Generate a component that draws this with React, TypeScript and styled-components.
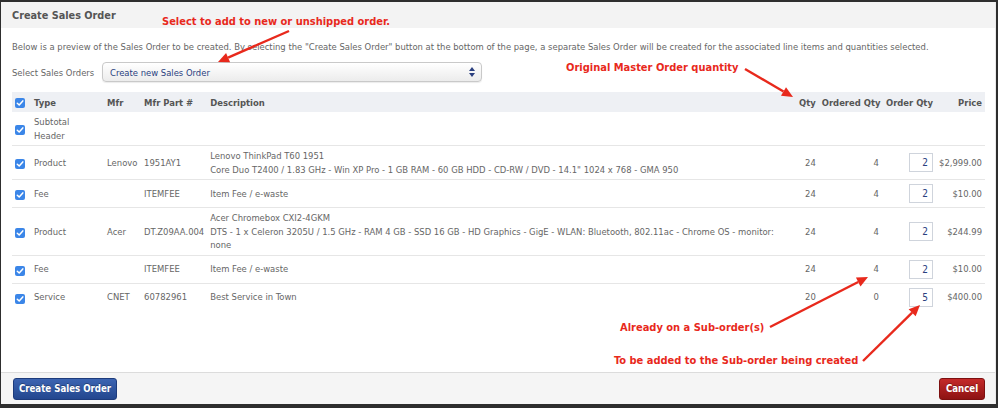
import styled, { createGlobalStyle } from 'styled-components'

const FONT = '"DejaVu Sans Condensed", "DejaVu Sans", Verdana, sans-serif'
const RED = '#e8291c'

type Line = {
  type: string[]
  mfr?: string
  part?: string
  desc?: string[]
  qty?: string
  ordered?: string
  orderQty?: string
  price?: string
}

const lines: Line[] = [
  { type: ['Subtotal', 'Header'] },
  {
    type: ['Product'],
    mfr: 'Lenovo',
    part: '1951AY1',
    desc: ['Lenovo ThinkPad T60 1951', 'Core Duo T2400 / 1.83 GHz - Win XP Pro - 1 GB RAM - 60 GB HDD - CD-RW / DVD - 14.1" 1024 x 768 - GMA 950'],
    qty: '24',
    ordered: '4',
    orderQty: '2',
    price: '$2,999.00',
  },
  { type: ['Fee'], part: 'ITEMFEE', desc: ['Item Fee / e-waste'], qty: '24', ordered: '4', orderQty: '2', price: '$10.00' },
  {
    type: ['Product'],
    mfr: 'Acer',
    part: 'DT.Z09AA.004',
    desc: [
      'Acer Chromebox CXI2-4GKM',
      'DTS - 1 x Celeron 3205U / 1.5 GHz - RAM 4 GB - SSD 16 GB - HD Graphics - GigE - WLAN: Bluetooth, 802.11ac - Chrome OS - monitor: none',
    ],
    qty: '24',
    ordered: '4',
    orderQty: '2',
    price: '$244.99',
  },
  { type: ['Fee'], part: 'ITEMFEE', desc: ['Item Fee / e-waste'], qty: '24', ordered: '4', orderQty: '2', price: '$10.00' },
  { type: ['Service'], mfr: 'CNET', part: '60782961', desc: ['Best Service in Town'], qty: '20', ordered: '0', orderQty: '5', price: '$400.00' },
]

const App = () => {
  return (
    <>
      <GlobalStyle />
      <Shell>
        <Dialog>
          <Header>
            <Title>Create Sales Order</Title>
          </Header>
          <Body>
            <Intro>
              Below is a preview of the Sales Order to be created. By selecting the "Create Sales Order" button at the bottom of the page, a separate
              Sales Order will be created for the associated line items and quantities selected.
            </Intro>
            <SelectRow>
              <SelectLabel>Select Sales Orders</SelectLabel>
              <SelectBox>
                <span>Create new Sales Order</span>
                <Spinner>
                  <svg width="6" height="10" viewBox="0 0 6 10">
                    <path d="M3 0 L6 4 L0 4 Z M0 6 L6 6 L3 10 Z" fill="#2a3f7f" />
                  </svg>
                </Spinner>
              </SelectBox>
            </SelectRow>
            <Table>
              <colgroup>
                <col style={{ width: 19 }} />
                <col style={{ width: 73 }} />
                <col style={{ width: 37 }} />
                <col style={{ width: 66 }} />
                <col style={{ width: 583 }} />
                <col style={{ width: 28 }} />
                <col style={{ width: 63 }} />
                <col style={{ width: 54 }} />
                <col style={{ width: 49 }} />
              </colgroup>
              <thead>
                <tr>
                  <Th>
                    <Check />
                  </Th>
                  <Th>Type</Th>
                  <Th>Mfr</Th>
                  <Th>Mfr Part #</Th>
                  <Th>Description</Th>
                  <Th $right>Qty</Th>
                  <Th $right>Ordered Qty</Th>
                  <Th $right>Order Qty</Th>
                  <Th $right>Price</Th>
                </tr>
              </thead>
              <tbody>
                {lines.map((line, i) => (
                  <Row key={i} $last={i === lines.length - 1}>
                    <Td>
                      <Check />
                    </Td>
                    <Td>
                      {line.type.map((t) => (
                        <div key={t}>{t}</div>
                      ))}
                    </Td>
                    <Td>{line.mfr}</Td>
                    <Td>{line.part}</Td>
                    <Td>
                      {line.desc?.map((d) => (
                        <div key={d}>{d}</div>
                      ))}
                    </Td>
                    <Td $right>{line.qty}</Td>
                    <Td $right>{line.ordered}</Td>
                    <Td $right>{line.orderQty && <QtyInput>{line.orderQty}</QtyInput>}</Td>
                    <Td $right>{line.price}</Td>
                  </Row>
                ))}
              </tbody>
            </Table>
          </Body>
          <Footer>
            <PrimaryButton>Create Sales Order</PrimaryButton>
            <CancelButton>Cancel</CancelButton>
          </Footer>

          <Note $x={161} $y={12}>Select to add to new or unshipped order.</Note>
          <Note $x={565} $y={58}>Original Master Order quantity</Note>
          <Note $x={619} $y={318}>Already on a Sub-order(s)</Note>
          <Note $x={613} $y={351}>To be added to the Sub-order being created</Note>
          <Arrows width="994" height="402" viewBox="0 0 994 402">
            <Arrow x1={288} y1={29} x2={217} y2={60} />
            <Arrow x1={744} y1={67} x2={792} y2={95} />
            <Arrow x1={769} y1={325} x2={867} y2={275} />
            <Arrow x1={862} y1={359} x2={919} y2={303} />
          </Arrows>
        </Dialog>
      </Shell>
    </>
  )
}

const Arrow = ({ x1, y1, x2, y2 }: { x1: number; y1: number; x2: number; y2: number }) => {
  const a = Math.atan2(y2 - y1, x2 - x1)
  const len = 11
  const w = 5
  const bx = x2 - len * Math.cos(a)
  const by = y2 - len * Math.sin(a)
  const px = -Math.sin(a) * w
  const py = Math.cos(a) * w
  return (
    <g>
      <line x1={x1} y1={y1} x2={bx} y2={by} stroke={RED} strokeWidth="2.4" />
      <polygon points={`${x2},${y2} ${bx + px},${by + py} ${bx - px},${by - py}`} fill={RED} />
    </g>
  )
}

const Check = () => (
  <CheckBox>
    <svg width="8" height="8" viewBox="0 0 8 8">
      <path d="M1.3 4.2 L3.2 6 L6.8 1.9" fill="none" stroke="#fff" strokeWidth="1.5" strokeLinecap="round" strokeLinejoin="round" />
    </svg>
  </CheckBox>
)

const GlobalStyle = createGlobalStyle`
  html, body {
    margin: 0;
    background: #2e2e2e;
  }
  body {
    font-family: ${FONT};
    font-size: 9.4px;
    color: #666;
  }
`

const Shell = styled.div`
  box-sizing: border-box;
  height: 408px;
  padding: 2px 3px 4px 1px;
`

const Dialog = styled.div`
  position: relative;
  box-sizing: border-box;
  width: 995px;
  height: 402px;
  border-right: 1px solid #e9e9e9;
  background: #fff;
  display: flex;
  flex-direction: column;
  overflow: hidden;
`

const Header = styled.div`
  height: 26px;
  flex: none;
  display: flex;
  align-items: center;
  padding: 0 12px 0 11px;
  background: #f3f3f3;
`

const Title = styled.h1`
  margin: 0;
  font-size: 10.8px;
  font-weight: bold;
  color: #555;
`

const Body = styled.div`
  flex: 1;
  padding: 0 10px 0 11px;
`

const Intro = styled.p`
  margin: 12px 0 0;
  line-height: 13px;
  white-space: nowrap;
`

const SelectRow = styled.div`
  display: flex;
  align-items: center;
  margin-top: 9px;
  height: 20px;
`

const SelectLabel = styled.span`
  width: 90px;
  flex: none;
  white-space: nowrap;
`

const SelectBox = styled.div`
  box-sizing: border-box;
  width: 380px;
  height: 20px;
  display: flex;
  align-items: center;
  justify-content: space-between;
  padding: 0 6px 0 7px;
  border: 1px solid #c9c9c9;
  border-radius: 4px;
  background: linear-gradient(#ffffff, #ececec);
  box-shadow: 0 1px 1px rgba(0, 0, 0, 0.08);
  color: #2a3f7f;
`

const Spinner = styled.span`
  display: flex;
`

const Table = styled.table`
  width: 973px;
  margin-top: 10px;
  border-collapse: collapse;
  table-layout: fixed;
`

const Th = styled.th<{ $right?: boolean }>`
  height: 20px;
  padding: 0 3px;
  background: #eef0f4;
  color: #555;
  font-weight: bold;
  font-size: 9.4px;
  text-align: ${(p) => (p.$right ? 'right' : 'left')};
  white-space: nowrap;
`

const Row = styled.tr<{ $last?: boolean }>`
  border-bottom: ${(p) => (p.$last ? 'none' : '1px solid #e6e6e6')};
`

const Td = styled.td<{ $right?: boolean }>`
  padding: 3px 3px;
  line-height: 13.5px;
  vertical-align: middle;
  text-align: ${(p) => (p.$right ? 'right' : 'left')};
  white-space: ${(p) => (p.$right ? 'nowrap' : 'normal')};
`

const CheckBox = styled.span`
  display: inline-flex;
  align-items: center;
  justify-content: center;
  width: 10px;
  height: 10px;
  margin-top: 2px;
  border-radius: 2px;
  background: #3b86e8;
  vertical-align: middle;
`

const QtyInput = styled.span`
  box-sizing: border-box;
  display: inline-block;
  width: 24px;
  height: 19px;
  margin: 1px 0;
  padding: 0 4px;
  line-height: 17px;
  border: 1px solid #cfd4dc;
  color: #2a3f7f;
  text-align: right;
  vertical-align: middle;
  font-size: 10px;
`

const Footer = styled.div`
  height: 31px;
  flex: none;
  display: flex;
  align-items: center;
  justify-content: space-between;
  padding: 0 10px 0 12px;
  border-top: 1px solid #dcdcdc;
  background: #f5f5f5;
`

const ButtonBase = styled.button`
  height: 22px;
  padding: 0;
  border-radius: 3px;
  color: #fff;
  font-family: ${FONT};
  font-size: 9.6px;
  font-weight: bold;
  text-shadow: 0 -1px 0 rgba(0, 0, 0, 0.3);
  white-space: nowrap;
  cursor: pointer;
`

const PrimaryButton = styled(ButtonBase)`
  width: 104px;
  border: 1px solid #1d3b7c;
  background: linear-gradient(#3c64b1, #23478f);
`

const CancelButton = styled(ButtonBase)`
  width: 46px;
  border: 1px solid #7d1010;
  background: linear-gradient(#c42a2a, #8e1313);
`

const Note = styled.div<{ $x: number; $y: number }>`
  position: absolute;
  left: ${(p) => p.$x}px;
  top: ${(p) => p.$y}px;
  color: ${RED};
  font-size: 11px;
  font-weight: bold;
  white-space: nowrap;
  line-height: 16px;
`

const Arrows = styled.svg`
  position: absolute;
  left: 0;
  top: 0;
  pointer-events: none;
`

export default App
